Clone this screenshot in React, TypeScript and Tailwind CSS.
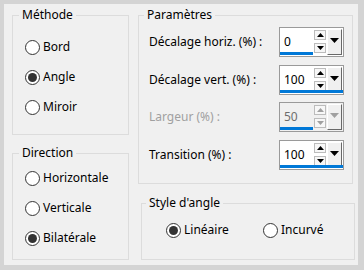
import React from "react";

function Radio({ label, checked }: { label: string; checked?: boolean }) {
  return (
    <div className="flex items-center h-[16px] gap-[3px]">
      <span className="w-[15px] h-[15px] rounded-full border border-[#333333] bg-white flex items-center justify-center shrink-0">
        {checked && <span className="w-[9px] h-[9px] rounded-full bg-[#333333]" />}
      </span>
      <span className="leading-[16px]">{label}</span>
    </div>
  );
}

function Tri({ up, color }: { up?: boolean; color: string }) {
  return (
    <svg width="7" height="4" viewBox="0 0 7 4">
      <polygon points={up ? "0,4 7,4 3.5,0" : "0,0 7,0 3.5,4"} fill={color} />
    </svg>
  );
}

function Spin({ value, disabled, fullBar }: { value: string; disabled?: boolean; fullBar?: boolean }) {
  const tri = disabled ? "#a0a0a0" : "#000000";
  return (
    <div className={`relative w-[65px] h-[30px] border border-[#9a9a9a] flex ${disabled ? "bg-[#f0f0f0]" : "bg-white"}`}>
      <div className={`w-[33px] pl-[4px] pt-[6px] leading-[16px] ${disabled ? "text-[#6d6d6d]" : "text-black"}`}>
        {value}
      </div>
      <div className="w-[14px] flex flex-col gap-[3px] pt-[2px] pl-[1px]">
        <div className="w-[12px] h-[10px] border border-[#bcbcbc] bg-[#f7f7f7] flex items-center justify-center">
          <Tri up color={tri} />
        </div>
        <div className="w-[12px] h-[10px] border border-[#bcbcbc] bg-[#f7f7f7] flex items-center justify-center">
          <Tri color={tri} />
        </div>
      </div>
      <div className="w-[15px] h-[26px] mt-[1px] bg-[#f0f0f0] border-t border-l border-t-white border-l-white border-r border-b border-r-[#696969] border-b-[#696969] flex justify-center pt-[8px]">
        <svg width="9" height="5" viewBox="0 0 9 5">
          <polygon points="0,0 9,0 4.5,5" fill={tri} />
        </svg>
      </div>
      <div className={`absolute left-0 bottom-[1px] h-[3px] bg-[#0078d7] ${fullBar ? "right-0" : "w-[33px]"}`} />
    </div>
  );
}

function Row({ label, value, disabled, fullBar }: { label: string; value: string; disabled?: boolean; fullBar?: boolean }) {
  return (
    <div className="grid grid-cols-[130px_65px] items-center h-[30px]">
      <span className={disabled ? "text-[#a0a0a0]" : "text-black"}>{label}</span>
      <Spin value={value} disabled={disabled} fullBar={fullBar} />
    </div>
  );
}

export default function App() {
  return (
    <div
      className="w-[364px] h-[270px] bg-[#d4d4d4] pt-[4px] pl-[4px] pr-[6px] pb-[5px] text-[12px] text-black"
      style={{ fontFamily: '"Noto Sans", "Open Sans", sans-serif' }}
    >
      <div className="w-full h-full bg-[#f0f0f0] flex pt-[3px] pl-[8px] gap-[9px]">
        {/* left column */}
        <div className="w-[117px] flex flex-col gap-[10px]">
          <fieldset className="h-[128px] border border-[#dcdcdc]">
            <legend className="ml-[6px] px-[3px] leading-[16px]">Méthode</legend>
            <div className="flex flex-col gap-[14px] pt-[16px] pl-[12px]">
              <Radio label="Bord" />
              <Radio label="Angle" checked />
              <Radio label="Miroir" />
            </div>
          </fieldset>
          <fieldset className="h-[115px] border border-[#dcdcdc]">
            <legend className="ml-[6px] px-[3px] leading-[16px]">Direction</legend>
            <div className="flex flex-col gap-[14px] pt-[9px] pl-[12px]">
              <Radio label="Horizontale" />
              <Radio label="Verticale" />
              <Radio label="Bilatérale" checked />
            </div>
          </fieldset>
        </div>

        {/* right column */}
        <div className="w-[217px] flex flex-col gap-[11px]">
          <fieldset className="w-[215px] h-[177px] border border-[#dcdcdc]">
            <legend className="ml-[5px] px-[3px] leading-[16px]">Paramètres</legend>
            <div className="flex flex-col gap-[7.5px] pt-[4px] pl-[10px]">
              <Row label="Décalage horiz. (%) :" value="0" />
              <Row label="Décalage vert. (%) :" value="100" fullBar />
              <Row label="Largeur (%) :" value="50" disabled />
              <Row label="Transition (%) :" value="100" fullBar />
            </div>
          </fieldset>
          <fieldset className="ml-[3px] w-[214px] h-[65px] border border-[#dcdcdc]">
            <legend className="ml-[4px] px-[3px] leading-[16px]">Style d'angle</legend>
            <div className="flex pt-[11px] pl-[24px]">
              <div className="w-[97px]">
                <Radio label="Linéaire" checked />
              </div>
              <Radio label="Incurvé" />
            </div>
          </fieldset>
        </div>
      </div>
    </div>
  );
}
